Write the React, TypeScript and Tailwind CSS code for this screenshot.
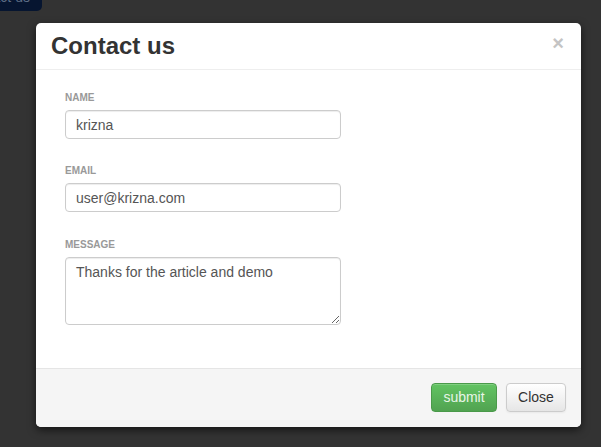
import React from "react";

export default function App() {
  return (
    <main
      className="relative w-[601px] h-[447px] overflow-hidden bg-[#333333] pt-[23px] pl-[36px]"
      style={{ fontFamily: '"Liberation Sans", Arial, sans-serif' }}
    >
      {/* page button behind the backdrop */}
      <button className="absolute top-[-17px] left-[-49px] h-[28px] px-[12px] rounded-[5px] bg-[#061530] text-[14px] text-[#5d6d85]">
        Contact us
      </button>

      {/* Modal */}
      <div className="relative w-[545px] rounded-[5px] bg-white shadow-[0_3px_9px_rgba(0,0,0,0.6)] overflow-hidden">
        <div className="flex items-center justify-between h-[47px] px-[15px] border-b border-[#eeeeee]">
          <h3 className="text-[24px] font-bold text-[#333333] leading-none">Contact us</h3>
          <span className="text-[20px] font-bold text-[#c4c4c4] leading-none mr-[2px] -mt-[6px]">×</span>
        </div>

        <form className="pt-[21px] pb-[43px] pl-[29px]">
          <label className="block text-[10px] leading-[14px] font-bold text-[#999999] uppercase">Name</label>
          <input
            defaultValue="krizna"
            className="mt-[5px] block w-[276px] h-[29px] px-[10px] rounded-[4px] border border-[#cccccc] text-[14px] text-[#555555] shadow-[inset_0_1px_1px_rgba(0,0,0,0.075)] outline-none"
          />

          <label className="block mt-[25px] text-[10px] leading-[14px] font-bold text-[#999999] uppercase">Email</label>
          <input
            defaultValue="user@krizna.com"
            className="mt-[5px] block w-[276px] h-[29px] px-[10px] rounded-[4px] border border-[#cccccc] text-[14px] text-[#555555] shadow-[inset_0_1px_1px_rgba(0,0,0,0.075)] outline-none"
          />

          <label className="block mt-[26px] text-[10px] leading-[14px] font-bold text-[#999999] uppercase">Message</label>
          <textarea
            defaultValue="Thanks for the article and demo"
            className="mt-[5px] block w-[276px] h-[68px] px-[10px] py-[4px] rounded-[4px] border border-[#cccccc] text-[14px] leading-[20px] text-[#555555] shadow-[inset_0_1px_1px_rgba(0,0,0,0.075)] outline-none"
          />
        </form>

        <div className="flex justify-end gap-[9px] h-[59px] px-[15px] pt-[14px] bg-[#f5f5f5] border-t border-[#e5e5e5]">
          <button className="h-[29px] w-[66px] rounded-[4px] border border-[#4a9a4a] bg-gradient-to-b from-[#62c462] to-[#51a351] text-[14px] text-[#e8f5e8] shadow-[inset_0_1px_0_rgba(255,255,255,0.2)]">
            submit
          </button>
          <button className="h-[29px] w-[60px] rounded-[4px] border border-[#cccccc] bg-gradient-to-b from-white to-[#e6e6e6] text-[14px] text-[#333333] shadow-[0_1px_2px_rgba(0,0,0,0.05)]">
            Close
          </button>
        </div>
      </div>
    </main>
  );
}
